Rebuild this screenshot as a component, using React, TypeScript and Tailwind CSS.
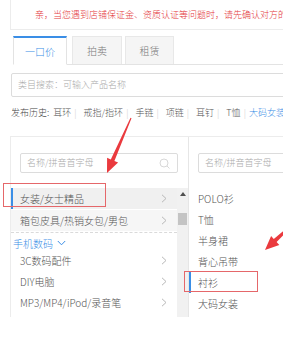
import React from 'react'

const BLUE = 'text-[#3a8ee6]'

const HISTORY = ['耳环', '戒指/指环', '手链', '项链', '耳钉', 'T恤']

function ChevronRight() {
  return (
    <svg width="6" height="9" viewBox="0 0 6 9" className="shrink-0">
      <path d="M1 0.8L5 4.5L1 8.2" fill="none" stroke="#b8b8b8" strokeWidth="1" />
    </svg>
  )
}

function SearchIcon() {
  return (
    <svg width="11" height="11" viewBox="0 0 11 11" className="shrink-0">
      <circle cx="5" cy="5" r="4" fill="none" stroke="#d8d8d8" strokeWidth="1" />
      <path d="M8 8L10.5 10.5" stroke="#d8d8d8" strokeWidth="1" />
    </svg>
  )
}

function LeftRow({ label, active, tint }: { label: string; active?: boolean; tint?: string }) {
  return (
    <div
      className={`flex h-[21px] items-center justify-between pr-[10px] ${tint ?? ''} ${
        active ? 'border-l-2 border-[#3a8ee6] pl-[7px]' : 'pl-[9px]'
      }`}
    >
      <span className="whitespace-nowrap">{label}</span>
      <ChevronRight />
    </div>
  )
}

function RightRow({ label, active }: { label: string; active?: boolean }) {
  return (
    <div
      className={`flex h-[21px] items-center whitespace-nowrap ${
        active ? 'border-l-2 border-[#3a8ee6] pl-[7px]' : 'pl-[9px]'
      }`}
    >
      {label}
    </div>
  )
}

export default function App() {
  return (
    <div className="relative h-[341px] w-[283px] overflow-hidden bg-white font-['Noto_Sans_CJK_SC','Noto_Sans',sans-serif] text-[10px] font-light text-[#555]">
      {/* Notice */}
      <div className="ml-[10px] flex h-[30px] w-[300px] items-center border border-t-0 border-[#ececec] pl-[24px] text-[9px] whitespace-nowrap text-[#e4393c]">
        亲，当您遇到店铺保证金、资质认证等问题时，请先确认对方的身份
      </div>

      {/* Tabs */}
      <div className="mt-[7px] ml-[13px] flex h-[28px] items-end border-b border-[#e3e3e3]">
        <div className="-mb-px flex h-[29px] w-[54px] items-center justify-center border border-t-2 border-[#e3e3e3] border-t-[#3a8ee6] border-b-white bg-white text-[10px] text-[#3a8ee6]">
          一口价
        </div>
        <div className="ml-[5px] flex h-[28px] w-[50px] items-center justify-center border border-b-0 border-[#e8e8e8] bg-[#f5f5f5] text-[10px] text-[#777]">
          拍卖
        </div>
        <div className="ml-[3px] flex h-[28px] w-[49px] items-center justify-center border border-b-0 border-[#e8e8e8] bg-[#f5f5f5] text-[10px] text-[#777]">
          租赁
        </div>
      </div>

      {/* Category search */}
      <div className="mt-[8px] ml-[11px] flex h-[24px] w-[300px] items-center rounded-[2px] border border-[#dcdcdc] pl-[6px] text-[9px] text-[#aaa]">
        类目搜索：可输入产品名称
      </div>

      {/* History */}
      <div className="mt-[9px] ml-[11px] flex h-[14px] items-center whitespace-nowrap text-[9px] text-[#444]">
        <span>发布历史:</span>
        {HISTORY.map((h) => (
          <React.Fragment key={h}>
            <span className="ml-[4px] text-[#555]">{h}</span>
            <span className="mx-[3px] text-[#ccc]">|</span>
          </React.Fragment>
        ))}
        <span className={BLUE}>大码女装</span>
      </div>

      {/* Category picker */}
      <div className="mt-[16px] ml-[10px] flex h-[181px] w-[300px] border-t border-l border-[#ececec]">
        {/* Left column */}
        <div className="flex w-[178px] shrink-0 flex-col border-r border-[#e6e6e6]">
          <div className="mt-[16px] ml-[9px] flex h-[20px] w-[158px] items-center justify-between rounded-[2px] border border-[#dcdcdc] pr-[7px] pl-[6px] text-[9px] text-[#aaa]">
            <span>名称/拼音首字母</span>
            <SearchIcon />
          </div>
          <div className="mt-[15px] flex flex-1">
            <div className="flex-1">
              <LeftRow label="女装/女士精品" active tint="bg-[#f0f0f0]" />
              <div className="h-px bg-white" />
              <LeftRow label="箱包皮具/热销女包/男包" tint="bg-[#f6f6f6]" />
              <div className="mt-px border-t border-dashed border-[#dadada]" />
              <div className={`mt-[3px] flex h-[14px] items-center pl-[2px] ${BLUE}`}>
                <span>手机数码</span>
                <svg width="9" height="6" viewBox="0 0 9 6" className="ml-[4px]">
                  <path d="M0.8 1L4.5 4.8L8.2 1" fill="none" stroke="#3a8ee6" strokeWidth="1" />
                </svg>
              </div>
              <LeftRow label="3C数码配件" />
              <LeftRow label="DIY电脑" />
              <LeftRow label="MP3/MP4/iPod/录音笔" />
            </div>
            <div className="flex w-[11px] flex-col items-center bg-[#f1f1f1]">
              <svg width="6" height="4" viewBox="0 0 6 4" className="mt-[4px]">
                <path d="M3 0L6 4H0Z" fill="#505050" />
              </svg>
              <div className="mt-[17px] h-[12px] w-[9px] bg-[#c4c4c4]" />
            </div>
          </div>
        </div>

        {/* Right column */}
        <div className="flex flex-1 flex-col">
          <div className="mt-[16px] ml-[9px] flex h-[20px] w-[120px] items-center rounded-[2px] border border-[#dcdcdc] pl-[6px] text-[9px] text-[#aaa]">
            名称/拼音首字母
          </div>
          <div className="mt-[15px]">
            <RightRow label="POLO衫" />
            <RightRow label="T恤" />
            <RightRow label="半身裙" />
            <RightRow label="背心吊带" />
            <RightRow label="衬衫" active />
            <RightRow label="大码女装" />
          </div>
        </div>
      </div>

      {/* Annotations */}
      <div className="pointer-events-none absolute top-[183px] left-[3px] h-[24px] w-[103px] border border-[#e5676a]" />
      <div className="pointer-events-none absolute top-[271px] left-[184px] h-[21px] w-[74px] border border-[#e5676a]" />
      <svg className="pointer-events-none absolute top-0 left-0" width="283" height="341" viewBox="0 0 283 341">
        <polygon
          points="131.5,118.2 114.4,161 118.1,162.6 107,173 107.1,157.8 110.8,159.4 130.5,117.8"
          fill="#ea3a3e"
        />
        <polygon
          points="295.5,222.5 276.6,242 279.3,244.9 265,250 271.1,236.1 273.8,239 294.5,221.5"
          fill="#ea3a3e"
        />
      </svg>
    </div>
  )
}
